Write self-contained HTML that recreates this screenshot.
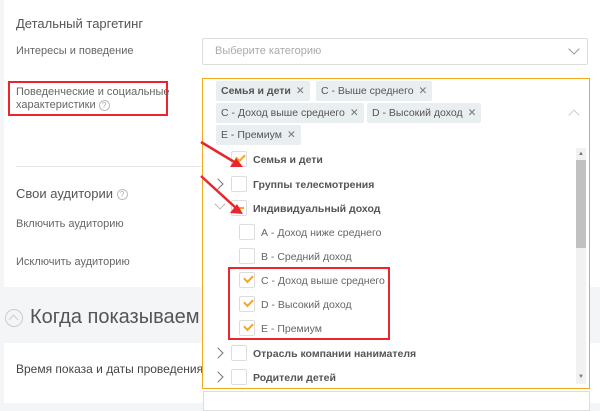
<!DOCTYPE html><html><head><meta charset="utf-8"><style>
*{margin:0;padding:0;box-sizing:border-box}
body{width:600px;height:401px;overflow:hidden;background:#f3f5f6;font-family:"Liberation Sans","DejaVu Sans",sans-serif;position:relative;color:#555}
.a{position:absolute;white-space:nowrap}
.card{position:absolute;background:#fff;left:4px;right:0}
.lbl{font-size:11px;color:#666}
.q{display:inline-block;width:11px;height:11px;border:1px solid #bbb;border-radius:50%;font-size:8px;text-align:center;line-height:9px;color:#aaa;vertical-align:middle}
.tag{position:absolute;background:#e9eef0;border-radius:2px;height:20px;font-size:10.5px;line-height:20px;padding:0 5px;color:#555;white-space:nowrap}
.tag i{font-style:normal;color:#777;margin-left:5px}
.cb{position:absolute;width:16px;height:16px;border:1px solid #ddd;border-radius:2px;background:#fff}
.ck::after{content:"";position:absolute;left:4px;top:2px;width:7px;height:4px;border-left:2px solid #f5a623;border-bottom:2px solid #f5a623;transform:rotate(-45deg)}
.it{position:absolute;font-size:10.5px;color:#666;white-space:nowrap}
.b{font-weight:bold;color:#555}
.chev{position:absolute;width:8px;height:8px;border-right:1.5px solid #777;border-top:1.5px solid #777;transform:rotate(45deg)}
</style></head><body>
<div class="card" style="top:0;height:287px"></div>
<div class="card" style="top:343px;height:60px"></div>
<div class="a" style="left:16px;top:16px;font-size:13px;color:#555">Детальный таргетинг</div>
<div class="a lbl" style="left:16px;top:45px">Интересы и поведение</div>
<div class="a" style="left:202px;top:38px;width:386px;height:27px;border:1px solid #ddd;border-radius:2px"></div>
<div class="a" style="left:215px;top:45px;font-size:11px;color:#aaa">Выберите категорию</div>
<div class="chev" style="left:570px;top:45px;transform:rotate(135deg);border-color:#999"></div>
<div class="a" style="left:8px;top:81px;width:160px;height:35px;border:2px solid #e8262b"></div>
<div class="a lbl" style="left:16px;top:86px;line-height:13px">Поведенческие и социальные<br>характеристики <span class="q">?</span></div>
<div class="a" style="left:16px;top:166px;width:186px;border-top:1px solid #e8e8e8"></div>
<div class="a" style="left:16px;top:186px;font-size:13px;color:#555">Свои аудитории <span class="q">?</span></div>
<div class="a lbl" style="left:16px;top:218px">Включить аудиторию</div>
<div class="a lbl" style="left:16px;top:256px">Исключить аудиторию</div>
<div class="a" style="left:5px;top:309px;width:18px;height:18px;border:1.5px solid #ccc;border-radius:50%"></div>
<div class="chev" style="left:10px;top:316px;transform:rotate(-45deg);border-color:#ccc;width:7px;height:7px"></div>
<div class="a" style="left:30px;top:306px;font-size:20px;color:#555">Когда показываем</div>
<div class="a" style="left:16px;top:362px;font-size:12px;color:#444">Время показа и даты проведения</div>
<div class="a" style="left:203px;top:391px;width:387px;height:20px;border:1px solid #ddd;background:#fff"></div>
<div class="a" style="left:202px;top:78px;width:388px;height:311px;border:1px solid #f5a623;background:#fff"></div>
<div class="tag" style="left:216px;top:81px"><b>Семья и дети</b><i>✕</i></div>
<div class="tag" style="left:316px;top:81px">С - Выше среднего<i>✕</i></div>
<div class="tag" style="left:216px;top:103px">С - Доход выше среднего<i>✕</i></div>
<div class="tag" style="left:367px;top:103px">D - Высокий доход<i>✕</i></div>
<div class="tag" style="left:216px;top:125px">Е - Премиум<i>✕</i></div>
<div class="chev" style="left:570px;top:111px;transform:rotate(-45deg);border-color:#ccc"></div>
<div class="a" style="left:576px;top:148px;width:10px;height:236px;background:#f1f1f1"></div>
<div class="a" style="left:576px;top:160px;width:10px;height:88px;background:#c1c1c1"></div>
<div class="a" style="left:578px;top:151px;font-size:6px;color:#777">▲</div>
<div class="a" style="left:578px;top:374px;font-size:6px;color:#777">▼</div>
<div class="cb ck" style="left:231px;top:151px"></div><div class="it b" style="left:253px;top:154px">Семья и дети</div>
<div class="chev" style="left:214px;top:180px"></div><div class="cb" style="left:231px;top:176px"></div><div class="it b" style="left:253px;top:179px">Группы телесмотрения</div>
<div class="chev" style="left:216px;top:200px;transform:rotate(135deg);border-color:#bbb"></div><div class="cb" style="left:231px;top:200px"></div><div class="a" style="left:234px;top:207px;width:10px;height:2px;background:#f5a623"></div><div class="it b" style="left:253px;top:203px">Индивидуальный доход</div>
<div class="cb" style="left:239px;top:224px"></div><div class="it" style="left:261px;top:227px">А - Доход ниже среднего</div>
<div class="cb" style="left:239px;top:248px"></div><div class="it" style="left:261px;top:251px">В - Средний доход</div>
<div class="cb ck" style="left:239px;top:272px"></div><div class="it" style="left:261px;top:275px">С - Доход выше среднего</div>
<div class="cb ck" style="left:239px;top:296px"></div><div class="it" style="left:261px;top:299px">D - Высокий доход</div>
<div class="cb ck" style="left:239px;top:320px"></div><div class="it" style="left:261px;top:323px">Е - Премиум</div>
<div class="chev" style="left:214px;top:349px"></div><div class="cb" style="left:231px;top:345px"></div><div class="it b" style="left:253px;top:348px">Отрасль компании нанимателя</div>
<div class="chev" style="left:214px;top:373px"></div><div class="cb" style="left:231px;top:369px"></div><div class="it b" style="left:253px;top:372px">Родители детей</div>
<div class="a" style="left:228px;top:267px;width:162px;height:73px;border:2px solid #e8262b"></div>
<svg class="a" style="left:0;top:0" width="600" height="401"><g stroke="#e8262b" stroke-width="2.5" fill="#e8262b">
<line x1="201" y1="142" x2="236" y2="163"/><polygon points="243,167 230,167 236,158" stroke="none"/>
<line x1="201" y1="176" x2="236" y2="208"/><polygon points="243,214 230,213 237,204" stroke="none"/></g></svg>
</body></html>
